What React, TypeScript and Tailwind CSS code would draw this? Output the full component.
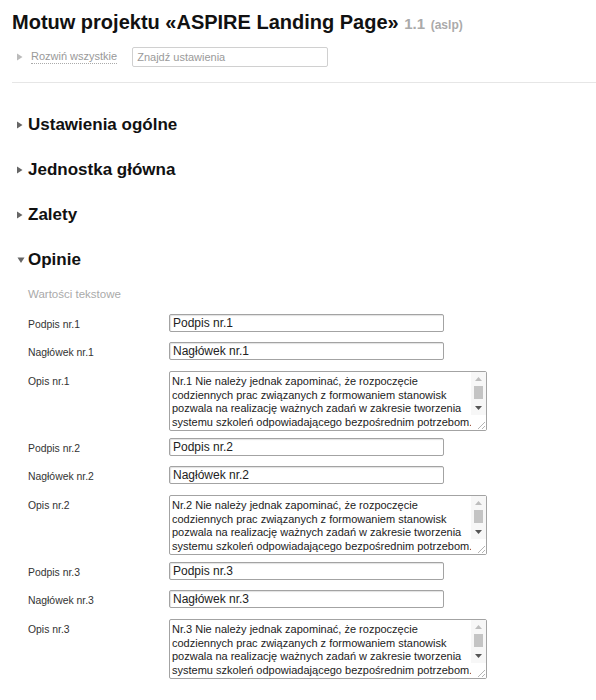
import React from "react";

const LOREM =
  " Nie należy jednak zapominać, że rozpoczęcie codziennych prac związanych z formowaniem stanowisk pozwala na realizację ważnych zadań w zakresie tworzenia systemu szkoleń odpowiadającego bezpośrednim potrzebom. Dlatego też konsultacja z szerokim gronem podmiotów wymaga sprecyzowania i określenia form oddziaływania.";

function TriRight({ color = "#666" }: { color?: string }) {
  return (
    <svg width="6" height="8" viewBox="0 0 6 8" className="shrink-0">
      <polygon points="0,0.5 5.5,4 0,7.5" fill={color} />
    </svg>
  );
}

function TriDown() {
  return (
    <svg width="8" height="6" viewBox="0 0 8 6" className="shrink-0">
      <polygon points="0.5,0.5 7.5,0.5 4,6" fill="#666" />
    </svg>
  );
}

function Section({ title, open }: { title: string; open?: boolean }) {
  return (
    <div className="flex items-center h-[24px] pl-[5px]">
      <div className="w-[11px] flex items-center">{open ? <TriDown /> : <TriRight />}</div>
      <span className="text-[17px] font-bold text-[#111] leading-[24px]">{title}</span>
    </div>
  );
}

function Label({ children }: { children: React.ReactNode }) {
  return (
    <div className="w-[141px] shrink-0 pt-[4px] text-[10.4px] leading-[14px] text-[#333]">
      {children}
    </div>
  );
}

function TextInput({ value }: { value: string }) {
  return (
    <input
      readOnly
      defaultValue={value}
      className="w-[275px] h-[18px] border border-[#a3a3a3] rounded-[2px] px-[3px] text-[12px] leading-[16px] text-[#222] bg-white shadow-[inset_1px_1px_1px_rgba(0,0,0,0.12)] outline-none"
    />
  );
}

function Grip() {
  return (
    <svg width="12" height="12" viewBox="0 0 12 12">
      <line x1="11" y1="4" x2="4" y2="11" stroke="#b5b5b5" strokeWidth="1" />
      <line x1="11" y1="8" x2="8" y2="11" stroke="#b5b5b5" strokeWidth="1" />
    </svg>
  );
}

function FakeTextarea({ value }: { value: string }) {
  return (
    <div className="relative w-[318px] h-[60px]">
      <textarea
        readOnly
        defaultValue={value}
        className="block w-[318px] h-[60px] resize-none overflow-hidden border border-[#a3a3a3] rounded-[2px] pl-[2px] pr-[8px] pt-[3px] text-[11px] leading-[13.6px] text-[#222] bg-white outline-none"
      />
      <div className="absolute right-[1px] top-[1px] bottom-[1px] w-[15px] bg-[#f7f7f7] flex flex-col">
        <div className="h-[14px] flex items-center justify-center">
          <svg width="7" height="4" viewBox="0 0 7 4">
            <polygon points="0,4 7,4 3.5,0" fill="#bdbdbd" />
          </svg>
        </div>
        <div className="h-[14px] flex justify-center">
          <div className="w-[9px] h-[13px] bg-[#c4c4c4]" />
        </div>
        <div className="h-[15px] flex items-center justify-center">
          <svg width="7" height="4" viewBox="0 0 7 4">
            <polygon points="0,0 7,0 3.5,4" fill="#555" />
          </svg>
        </div>
        <div className="flex-1 flex items-end justify-end bg-white">
          <Grip />
        </div>
      </div>
    </div>
  );
}

function Group({ n }: { n: number }) {
  return (
    <div className="flex flex-col">
      <div className="flex">
        <Label>Podpis nr.{n}</Label>
        <TextInput value={`Podpis nr.${n}`} />
      </div>
      <div className="flex mt-[10px]">
        <Label>Nagłówek nr.{n}</Label>
        <TextInput value={`Nagłówek nr.${n}`} />
      </div>
      <div className="flex mt-[11px] mb-[7px]">
        <Label>Opis nr.{n}</Label>
        <FakeTextarea value={`Nr.${n}${LOREM}`} />
      </div>
    </div>
  );
}

export default function App() {
  return (
    <div className="w-[596px] h-[700px] overflow-hidden bg-white font-['Liberation_Sans',Arial,sans-serif] text-[#333]">
      <div className="pl-[12px]">
        <h1 className="pt-[10px] text-[20px] leading-[24px] font-bold text-[#111] whitespace-nowrap">
          Motuw projektu «ASPIRE Landing Page»{" "}
          <span className="text-[15px] text-[#aaa]">1.1</span>{" "}
          <span className="text-[12px] text-[#aaa]">(aslp)</span>
        </h1>

        <div className="mt-[10px] h-[20px] flex items-center pl-[5px]">
          <div className="w-[14px] flex items-center">
            <TriRight color="#bbb" />
          </div>
          <span className="text-[11px] text-[#999] leading-[13px] border-b border-dotted border-[#aaa]">
            Rozwiń wszystkie
          </span>
          <input
            readOnly
            placeholder="Znajdź ustawienia"
            className="ml-[15px] w-[196px] h-[20px] border border-[#d0d0d0] rounded-[2px] px-[4px] text-[11px] text-[#333] placeholder:text-[#9a9a9a] outline-none"
          />
        </div>

        <div className="mt-[15px] border-t border-[#e6e6e6]" />

        <div className="mt-[30px] flex flex-col gap-[21px]">
          <Section title="Ustawienia ogólne" />
          <Section title="Jednostka główna" />
          <Section title="Zalety" />
          <Section title="Opinie" open />
        </div>

        <div className="pl-[16px]">
          <div className="mt-[14px] text-[11.5px] leading-[16px] text-[#aaa]">Wartości tekstowe</div>
          <div className="mt-[12px]">
            <Group n={1} />
            <Group n={2} />
            <Group n={3} />
          </div>
        </div>
      </div>
    </div>
  );
}
